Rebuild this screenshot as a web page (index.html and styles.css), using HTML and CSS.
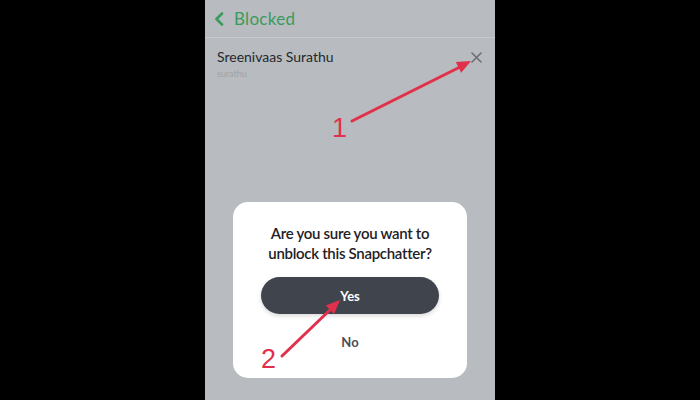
FILE: index.html
```html
<!DOCTYPE html>
<html>
<head>
<meta charset="utf-8">
<link rel="stylesheet" href="styles.css">
</head>
<body>
<div class="frame">
  <div class="screen">
    <div class="header">
      <svg class="chev" width="10" height="14" viewBox="0 0 10 14"><path d="M8 1.5 L2.5 7 L8 12.5" fill="none" stroke="#3a9b5c" stroke-width="2.6" stroke-linecap="round" stroke-linejoin="round"/></svg>
      <span class="title">Blocked</span>
    </div>
    <div class="row">
      <div class="names">
        <div class="name">Sreenivaas Surathu</div>
        <div class="user">surathu</div>
      </div>
      <svg class="close" width="11" height="11" viewBox="0 0 11 11"><path d="M1 1 L10 10 M10 1 L1 10" stroke="#6c6f74" stroke-width="1.6" stroke-linecap="round"/></svg>
    </div>
    <div class="modal">
      <div class="question">Are you sure you want to<br>unblock this Snapchatter?</div>
      <div class="yes">Yes</div>
      <div class="no">No</div>
    </div>
  </div>
</div>
<svg class="annot" width="700" height="400" viewBox="0 0 700 400">
  <g stroke="#e1304b" stroke-width="3" stroke-linecap="round">
    <line x1="352" y1="121" x2="460" y2="67"/>
    <line x1="282" y1="356" x2="331" y2="309"/>
  </g>
  <g fill="#e1304b">
    <polygon points="471,61 461.2,72.7 455.8,61.9"/>
    <polygon points="340,300 334.1,314 325.7,305.4"/>
    <text x="332" y="137" class="num">1</text>
    <text x="261" y="368" class="num">2</text>
  </g>
</svg>
</body>
</html>
```
FILE: styles.css
```css
html, body {
  margin: 0;
  padding: 0;
  background: #000;
}
body {
  width: 700px;
  height: 400px;
  overflow: hidden;
  position: relative;
  font-family: Lato, "Open Sans", sans-serif;
}
.frame {
  display: flex;
  justify-content: center;
  height: 400px;
}
.screen {
  width: 290px;
  height: 400px;
  background: #b8bbbf;
  display: flex;
  flex-direction: column;
}
.header {
  height: 37px;
  border-bottom: 1px solid #c7c9cc;
  display: flex;
  align-items: center;
  padding-left: 9px;
  gap: 10px;
}
.chev { display: block; }
.title {
  color: #3a9b5c;
  font-size: 17px;
  font-weight: 400;
  letter-spacing: 0.3px;
}
.row {
  height: 50px;
  display: flex;
  align-items: flex-start;
  justify-content: space-between;
  padding: 10px 12px 0 12px;
  box-sizing: border-box;
}
.name {
  color: #26282c;
  font-size: 14px;
  line-height: 18px;
}
.user {
  color: #a0a3a8;
  font-size: 9px;
  line-height: 12px;
  margin-top: 2px;
}
.close {
  margin-top: 4px;
  margin-right: 1px;
}
.modal {
  margin: 114px 28px 0 28px;
  background: #fff;
  border-radius: 15px;
  height: 176px;
  box-sizing: border-box;
  padding: 21px 20px 8px;
  display: flex;
  flex-direction: column;
  align-items: stretch;
}
.question {
  text-align: center;
  font-size: 15px;
  line-height: 20px;
  font-weight: 600;
  letter-spacing: -0.3px;
  color: #1f2125;
  padding: 0 8px;
}
.yes {
  margin: 14px 8px 0;
  height: 37px;
  border-radius: 19px;
  background: #40444c;
  color: #fff;
  font-size: 13px;
  font-weight: 700;
  display: flex;
  align-items: center;
  justify-content: center;
  box-shadow: 0 2px 4px rgba(0,0,0,0.15);
}
.no {
  height: 56px;
  display: flex;
  align-items: center;
  justify-content: center;
  color: #4a4e56;
  font-size: 13px;
  font-weight: 700;
}
.annot {
  position: absolute;
  left: 0;
  top: 0;
}
.num {
  font-family: "Liberation Sans", Arial, sans-serif;
  font-size: 27px;
}
```
